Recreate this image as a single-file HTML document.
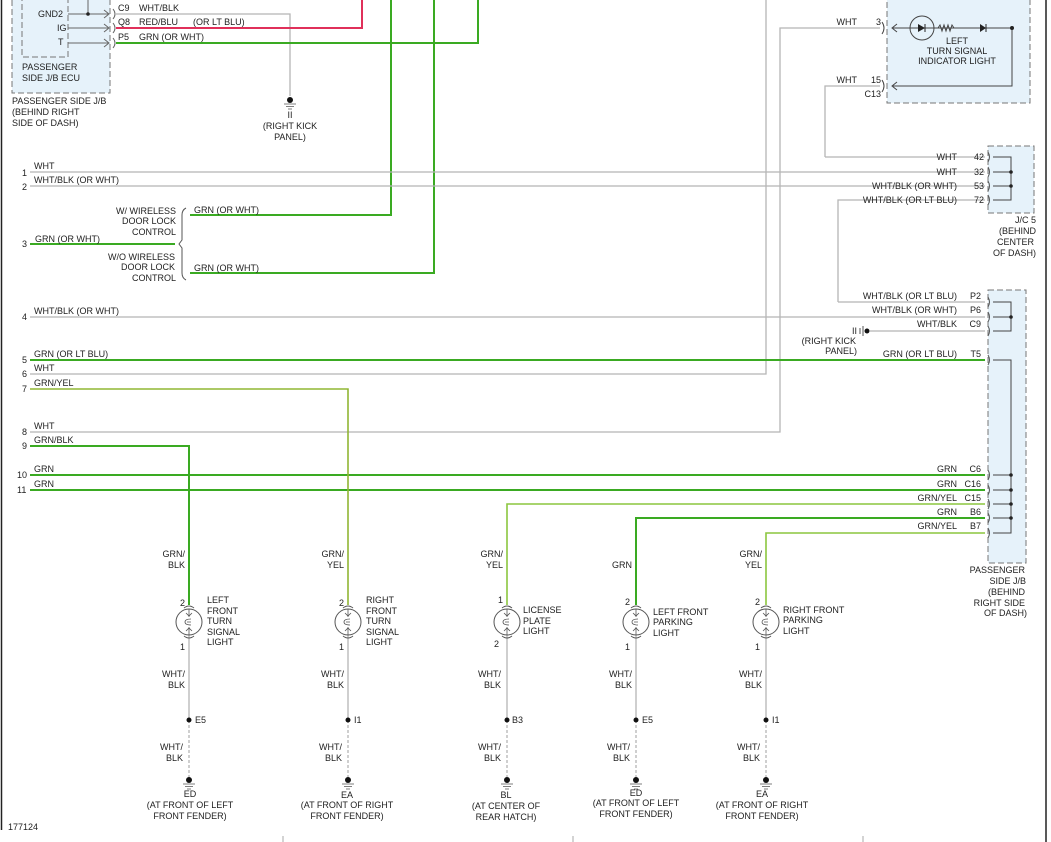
<!DOCTYPE html>
<html><head><meta charset="utf-8"><style>
html,body{margin:0;padding:0;background:#fff;}
svg{display:block;}
text{font-family:"Liberation Sans",sans-serif;font-size:9px;fill:#222;}
.r{text-anchor:end}.m{text-anchor:middle}
</style></head><body>
<svg width="1051" height="842" viewBox="0 0 1051 842" xmlns="http://www.w3.org/2000/svg">
<defs>
<g id="lamp">
<circle cx="0" cy="0" r="13" fill="none" stroke="#555" stroke-width="1"/>
<path d="M-5,-14 Q0,-18 5,-14 M-5,14 Q0,18 5,14" fill="none" stroke="#555"/>
<path d="M0,-13 L0,-5 M0,5 L0,13 M-3,-9 L0,-6 L3,-9 M-3,9 L0,6 L3,9" fill="none" stroke="#555" stroke-width="0.8"/>
<path d="M2,-3 Q-4,-3 -4,0 Q-4,3 2,3 M-2,0 L2,0" fill="none" stroke="#555" stroke-width="0.8"/>
</g>
<g id="gnd">
<circle cx="0" cy="0" r="3" fill="#111"/>
<path d="M-6,4 H6 M-4,6.5 H4 M-2,9 H2" stroke="#555" stroke-width="0.8"/>
</g>
</defs>
<rect width="1051" height="842" fill="#fff"/>
<!-- borders -->
<line x1="1.5" y1="0" x2="1.5" y2="830" stroke="#222" stroke-width="1.5"/>
<line x1="1046" y1="0" x2="1046" y2="842" stroke="#222" stroke-width="1.5"/>
<path d="M283,836V842 M573,836V842 M863,836V842" stroke="#aaa"/>

<!-- ECU box -->
<rect x="12" y="-2" width="98" height="95" fill="#e6f2fa" stroke="#777" stroke-dasharray="6,3"/>
<rect x="22" y="-2" width="46" height="59" fill="none" stroke="#777" stroke-dasharray="6,3"/>
<g stroke="#666" fill="none">
<path d="M68,14H108 M68,28H108 M68,43H108 M88,0V14"/>
<path d="M104,10L109,14L104,18 M104,24L109,28L104,32 M104,39L109,43L104,47"/>
<path d="M113,9Q117,14 113,19 M113,23Q117,28 113,33 M113,38Q117,43 113,48"/>
</g>
<circle cx="88" cy="14" r="1.8" fill="#222"/>
<text x="38" y="17">GND2</text><text x="57" y="31">IG</text><text x="58" y="45">T</text>
<text x="22" y="70">PASSENGER</text><text x="22" y="81">SIDE J/B ECU</text>
<text x="12" y="104">PASSENGER SIDE J/B</text><text x="12" y="115">(BEHIND RIGHT</text><text x="12" y="126">SIDE OF DASH)</text>
<text x="118" y="11">C9</text><text x="139" y="11">WHT/BLK</text>
<text x="118" y="25">Q8</text><text x="139" y="25">RED/BLU</text><text x="193" y="25">(OR LT BLU)</text>
<text x="118" y="40">P5</text><text x="139" y="40">GRN (OR WHT)</text>

<!-- top wires -->
<path d="M116,14H290V96" stroke="#b5b5b5" fill="none" stroke-width="1.3"/>
<path d="M116,28H362V0" stroke="#e0305a" fill="none" stroke-width="2"/>
<path d="M116,43H478V0" stroke="#3aaa22" fill="none" stroke-width="2"/>
<path d="M391,0V215H190 M434,0V273H190 M30,244H175" stroke="#3aaa22" fill="none" stroke-width="2"/>
<use href="#gnd" x="290" y="100"/>
<text x="290" y="118" class="m">II</text><text x="290" y="129" class="m">(RIGHT KICK</text><text x="290" y="140" class="m">PANEL)</text>

<!-- bracket -->
<path d="M186,208Q182,210 182,215V240L179,244L182,248V273Q182,278 186,280" stroke="#555" fill="none"/>
<text x="176" y="214" class="r">W/ WIRELESS</text><text x="176" y="224" class="r">DOOR LOCK</text><text x="176" y="235" class="r">CONTROL</text>
<text x="175" y="260" class="r">W/O WIRELESS</text><text x="175" y="270" class="r">DOOR LOCK</text><text x="176" y="281" class="r">CONTROL</text>
<text x="194" y="213">GRN (OR WHT)</text><text x="194" y="271">GRN (OR WHT)</text>
<text x="35" y="242">GRN (OR WHT)</text>

<!-- row wires -->
<g fill="none" stroke-width="1.3" stroke="#b5b5b5">
<path d="M30,172H985 M30,186H985 M30,317H985 M30,374H766V0 M30,432H780V28H880 M825,157V86H880 M825,157H985 M838,302V200H985 M838,302H985 M870,331H985"/>
</g>
<g fill="none" stroke-width="2" stroke="#3aaa22">
<path d="M30,360H985 M30,475H985 M30,490H985 M636,605V518H985 M189,605V446H30"/>
</g>
<g fill="none" stroke-width="1.6" stroke="#8cc63f">
<path d="M30,389H348V605 M507,605V504H985 M766,605V533H985"/>
</g>
<path d="M30,389H348V605" fill="none" stroke="#9a9a20" stroke-width="0.6"/>

<!-- row labels -->
<text x="22" y="176">1</text><text x="22" y="190">2</text><text x="22" y="247">3</text><text x="22" y="320">4</text>
<text x="22" y="363">5</text><text x="22" y="377">6</text><text x="22" y="392">7</text><text x="22" y="435">8</text>
<text x="22" y="449">9</text><text x="17" y="478">10</text><text x="17" y="493">11</text>
<text x="34" y="169">WHT</text><text x="34" y="183">WHT/BLK (OR WHT)</text><text x="34" y="314">WHT/BLK (OR WHT)</text>
<text x="34" y="357">GRN (OR LT BLU)</text><text x="34" y="371">WHT</text><text x="34" y="386">GRN/YEL</text>
<text x="34" y="429">WHT</text><text x="34" y="443">GRN/BLK</text><text x="34" y="472">GRN</text><text x="34" y="487">GRN</text>

<!-- indicator box -->
<rect x="887" y="-2" width="143" height="105" fill="#e6f2fa" stroke="#777" stroke-dasharray="6,3"/>
<g stroke="#444" fill="none">
<path d="M893,28H1012V86H893 M897,24L892,28L897,32 M897,82L892,86L897,90"/>
<path d="M882,22Q886,28 882,34 M882,80Q886,86 882,92"/>
<circle cx="922" cy="28" r="12"/>
<path d="M938,28l2,-3l2,6l2,-6l2,6l2,-6l2,6l2,-6l2,3"/>
</g>
<path d="M918,24V32L925,28Z M980,24V32L986,28Z" fill="#222"/>
<path d="M925,24V32 M986,24V32" stroke="#222"/>
<circle cx="1012" cy="28" r="2" fill="#222"/>
<text x="957" y="44" class="m">LEFT</text><text x="957" y="54" class="m">TURN SIGNAL</text><text x="957" y="64" class="m">INDICATOR LIGHT</text>
<text x="857" y="25" class="r">WHT</text><text x="881" y="25" class="r">3</text>
<text x="857" y="83" class="r">WHT</text><text x="881" y="83" class="r">15</text><text x="881" y="97" class="r">C13</text>

<!-- J/C 5 -->
<rect x="988" y="146" width="46" height="67" fill="#e6f2fa" stroke="#777" stroke-dasharray="6,3"/>
<g stroke="#444" fill="none">
<path d="M993,157H1011V200H993 M993,172H1011 M993,186H1011"/>
</g>
<circle cx="1011" cy="172" r="1.8" fill="#222"/><circle cx="1011" cy="186" r="1.8" fill="#222"/>
<text x="957" y="160" class="r">WHT</text><text x="957" y="175" class="r">WHT</text><text x="957" y="189" class="r">WHT/BLK (OR WHT)</text><text x="957" y="203" class="r">WHT/BLK (OR LT BLU)</text>
<text x="984" y="160" class="r">42</text><text x="984" y="175" class="r">32</text><text x="984" y="189" class="r">53</text><text x="984" y="203" class="r">72</text>
<text x="1036" y="223" class="r">J/C 5</text><text x="1036" y="234" class="r">(BEHIND</text><text x="1034" y="245" class="r">CENTER</text><text x="1036" y="256" class="r">OF DASH)</text>

<!-- Passenger J/B right -->
<rect x="988" y="290" width="38" height="273" fill="#e6f2fa" stroke="#777" stroke-dasharray="6,3"/>
<g stroke="#444" fill="none">
<path d="M993,302H1011V331H993 M993,317H1011 M993,360H1011V533H993 M993,475H1011 M993,490H1011 M993,504H1011 M993,518H1011"/>
</g>
<g fill="#222"><circle cx="1011" cy="317" r="1.8"/><circle cx="1011" cy="475" r="1.8"/><circle cx="1011" cy="490" r="1.8"/><circle cx="1011" cy="504" r="1.8"/><circle cx="1011" cy="518" r="1.8"/></g>
<g stroke="#555" fill="none">
<path d="M988,297Q991,302 988,307 M988,312Q991,317 988,322 M988,326Q991,331 988,336 M988,355Q991,360 988,365 M988,470Q991,475 988,480 M988,485Q991,490 988,495 M988,499Q991,504 988,509 M988,513Q991,518 988,523 M988,528Q991,533 988,538"/>
<path d="M988,152Q991,157 988,162 M988,167Q991,172 988,177 M988,181Q991,186 988,191 M988,195Q991,200 988,205"/>
</g>
<text x="957" y="299" class="r">WHT/BLK (OR LT BLU)</text><text x="957" y="313" class="r">WHT/BLK (OR WHT)</text><text x="957" y="327" class="r">WHT/BLK</text>
<text x="957" y="357" class="r">GRN (OR LT BLU)</text><text x="957" y="472" class="r">GRN</text><text x="957" y="487" class="r">GRN</text>
<text x="957" y="501" class="r">GRN/YEL</text><text x="957" y="515" class="r">GRN</text><text x="957" y="529" class="r">GRN/YEL</text>
<text x="981" y="299" class="r">P2</text><text x="981" y="313" class="r">P6</text><text x="981" y="327" class="r">C9</text><text x="981" y="357" class="r">T5</text>
<text x="981" y="472" class="r">C6</text><text x="981" y="487" class="r">C16</text><text x="981" y="501" class="r">C15</text><text x="981" y="515" class="r">B6</text><text x="981" y="529" class="r">B7</text>
<text x="1025" y="573" class="r">PASSENGER</text><text x="1026" y="584" class="r">SIDE J/B</text><text x="1025" y="595" class="r">(BEHIND</text><text x="1025" y="606" class="r">RIGHT SIDE</text><text x="1027" y="616" class="r">OF DASH)</text>
<circle cx="867" cy="331" r="2.5" fill="#111"/><path d="M863,326V336 M860,328V334" stroke="#555"/>
<text x="857" y="334" class="r">II</text><text x="856" y="344" class="r">(RIGHT KICK</text><text x="857" y="354" class="r">PANEL)</text>

<!-- lamps -->
<g fill="none" stroke="#b5b5b5" stroke-width="1.3">
<path d="M189,635V720 M348,635V720 M507,635V720 M636,635V720 M766,635V720"/>
<path d="M189,720V778 M348,720V778 M507,720V778 M636,720V778 M766,720V778" stroke-dasharray="3,2"/>
</g>
<use href="#lamp" x="189" y="622"/><use href="#lamp" x="348" y="622"/><use href="#lamp" x="507" y="622"/><use href="#lamp" x="636" y="622"/><use href="#lamp" x="766" y="622"/>
<g fill="#111"><circle cx="189" cy="720" r="2.5"/><circle cx="348" cy="720" r="2.5"/><circle cx="507" cy="720" r="2.5"/><circle cx="636" cy="720" r="2.5"/><circle cx="766" cy="720" r="2.5"/></g>
<use href="#gnd" x="189" y="780"/><use href="#gnd" x="348" y="780"/><use href="#gnd" x="507" y="780"/><use href="#gnd" x="636" y="780"/><use href="#gnd" x="766" y="780"/>

<text x="185" y="557" class="r">GRN/</text><text x="185" y="568" class="r">BLK</text>
<text x="344" y="557" class="r">GRN/</text><text x="344" y="568" class="r">YEL</text>
<text x="503" y="557" class="r">GRN/</text><text x="503" y="568" class="r">YEL</text>
<text x="632" y="568" class="r">GRN</text>
<text x="762" y="557" class="r">GRN/</text><text x="762" y="568" class="r">YEL</text>

<text x="180" y="606">2</text><text x="180" y="650">1</text>
<text x="339" y="606">2</text><text x="339" y="650">1</text>
<text x="498" y="603">1</text><text x="494" y="647">2</text>
<text x="625" y="605">2</text><text x="625" y="650">1</text>
<text x="755" y="605">2</text><text x="755" y="650">1</text>

<text x="207" y="603">LEFT</text><text x="207" y="614">FRONT</text><text x="207" y="624">TURN</text><text x="207" y="635">SIGNAL</text><text x="207" y="645">LIGHT</text>
<text x="366" y="603">RIGHT</text><text x="366" y="614">FRONT</text><text x="366" y="624">TURN</text><text x="366" y="635">SIGNAL</text><text x="366" y="645">LIGHT</text>
<text x="523" y="613">LICENSE</text><text x="523" y="624">PLATE</text><text x="523" y="634">LIGHT</text>
<text x="653" y="615">LEFT FRONT</text><text x="653" y="625">PARKING</text><text x="653" y="636">LIGHT</text>
<text x="783" y="613">RIGHT FRONT</text><text x="783" y="623">PARKING</text><text x="783" y="634">LIGHT</text>

<g class="r">
<text x="185" y="677" class="r">WHT/</text><text x="185" y="688" class="r">BLK</text>
<text x="344" y="677" class="r">WHT/</text><text x="344" y="688" class="r">BLK</text>
<text x="501" y="677" class="r">WHT/</text><text x="501" y="688" class="r">BLK</text>
<text x="632" y="677" class="r">WHT/</text><text x="632" y="688" class="r">BLK</text>
<text x="762" y="677" class="r">WHT/</text><text x="762" y="688" class="r">BLK</text>
<text x="183" y="750" class="r">WHT/</text><text x="183" y="761" class="r">BLK</text>
<text x="342" y="750" class="r">WHT/</text><text x="342" y="761" class="r">BLK</text>
<text x="501" y="750" class="r">WHT/</text><text x="501" y="761" class="r">BLK</text>
<text x="630" y="750" class="r">WHT/</text><text x="630" y="761" class="r">BLK</text>
<text x="760" y="750" class="r">WHT/</text><text x="760" y="761" class="r">BLK</text>
</g>
<text x="195" y="723">E5</text><text x="354" y="723">I1</text><text x="512" y="723">B3</text><text x="642" y="723">E5</text><text x="772" y="723">I1</text>

<text x="190" y="797" class="m">ED</text><text x="190" y="808" class="m">(AT FRONT OF LEFT</text><text x="190" y="819" class="m">FRONT FENDER)</text>
<text x="347" y="798" class="m">EA</text><text x="347" y="808" class="m">(AT FRONT OF RIGHT</text><text x="347" y="819" class="m">FRONT FENDER)</text>
<text x="506" y="798" class="m">BL</text><text x="506" y="809" class="m">(AT CENTER OF</text><text x="506" y="820" class="m">REAR HATCH)</text>
<text x="636" y="796" class="m">ED</text><text x="636" y="806" class="m">(AT FRONT OF LEFT</text><text x="636" y="817" class="m">FRONT FENDER)</text>
<text x="762" y="797" class="m">EA</text><text x="762" y="808" class="m">(AT FRONT OF RIGHT</text><text x="762" y="819" class="m">FRONT FENDER)</text>
<text x="8" y="830">177124</text>
</svg>
</body></html>
